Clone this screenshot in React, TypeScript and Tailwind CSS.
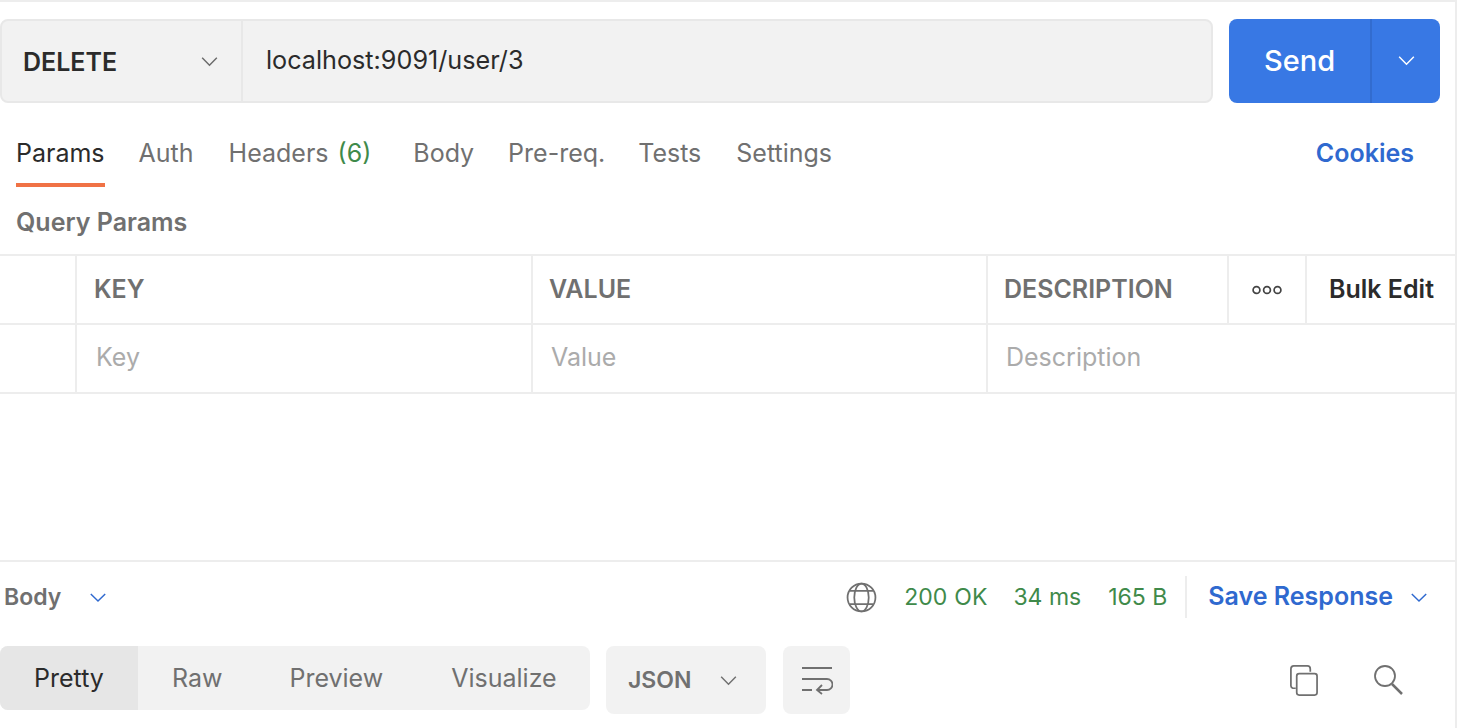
import React from "react";

const Chevron = ({ className }: { className: string }) => (
  <svg viewBox="0 0 20 12" fill="none" stroke="currentColor" strokeWidth="1.6" className={className}>
    <path d="M2 2l8 8 8-8" />
  </svg>
);

const HeaderCell = ({ w, children }: { w: string; children?: React.ReactNode }) => (
  <div className={`${w} shrink-0 h-full border-r-2 border-[#ededed] flex items-center pt-[1px] text-[25px] font-semibold text-[#707070]`}>{children}</div>
);

const RowCell = ({ w, children }: { w: string; children?: React.ReactNode }) => (
  <div className={`${w} shrink-0 h-full border-r-2 border-[#ededed] flex items-center pb-[2px] text-[25px] text-[#ababab]`}>{children}</div>
);

export default function App() {
  return (
    <div className="w-[1466px] h-[728px] bg-white overflow-hidden font-['Inter',sans-serif]">
      <div className="w-[1457px] h-[728px] border-r-2 border-t-2 border-[#ededed] flex flex-col">
        {/* Request bar */}
        <div className="flex h-[84px] mt-[17px] pr-[15px] gap-4 shrink-0">
          <div className="flex flex-1 h-full bg-[#f2f2f2] border-2 border-[#e8e8e8] rounded-lg">
            <div className="w-[241px] h-full shrink-0 border-r-2 border-[#e8e8e8] flex items-center justify-between pl-[21px] pr-[22px]">
              <span className="text-[25px] font-semibold text-[#2b2b2b] pt-[4px]">DELETE</span>
              <Chevron className="w-[19px] h-[11px] text-[#6b6b6b]" />
            </div>
            <div className="flex-1 flex items-center pl-[23px] text-[25.2px] text-[#2b2b2b]">localhost:9091/user/3</div>
          </div>
          <div className="w-[211px] h-full flex rounded-lg bg-[#3878e4] text-white">
            <div className="w-[143px] border-r-2 border-[#326ccf] flex items-center justify-center text-[29px] font-medium">Send</div>
            <div className="flex-1 flex items-center justify-center pb-[2px]">
              <Chevron className="w-[19px] h-[11px]" />
            </div>
          </div>
        </div>

        {/* Tabs */}
        <div className="flex h-[68px] mt-[16px] px-[16px] items-center shrink-0 text-[25px] text-[#707070]">
          <div className="relative h-full flex items-center text-[#2b2b2b] pt-[2px]">
            Params
            <div className="absolute left-0 right-0 bottom-0 h-[4px] bg-[#f07245]" />
          </div>
          <span className="ml-[34px] pt-[2px]">Auth</span>
          <span className="ml-[35px] pt-[2px]">Headers <span className="ml-[2px] text-[#3f8a4a]">(6)</span></span>
          <span className="ml-[42px] pt-[2px]">Body</span>
          <span className="ml-[34px] pt-[2px]">Pre-req.</span>
          <span className="ml-[33px] pt-[2px]">Tests</span>
          <span className="ml-[35px] pt-[2px]">Settings</span>
          <span className="ml-auto mr-[25px] font-semibold text-[#2f69cf] pt-[2px]">Cookies</span>
        </div>

        {/* Query params */}
        <div className="h-[67px] flex items-center pl-[16px] pt-[4px] text-[25px] font-semibold text-[#707070] shrink-0">Query Params</div>

        {/* Table */}
        <div className="border-t-2 border-[#ededed] shrink-0">
          <div className="h-[69px] flex border-b-2 border-[#ededed]">
            <HeaderCell w="w-[77px]" />
            <HeaderCell w="w-[456px] pl-[17px]">KEY</HeaderCell>
            <HeaderCell w="w-[455px] pl-[16px]">VALUE</HeaderCell>
            <HeaderCell w="w-[241px] pl-[16px]">DESCRIPTION</HeaderCell>
            <div className="w-[78px] shrink-0 h-full border-r-2 border-[#ededed] flex items-center justify-center">
              <svg viewBox="0 0 30 10" fill="none" stroke="#444" strokeWidth="1.7" className="w-[30px] h-[10px]">
                <circle cx="4.5" cy="5" r="3.4" />
                <circle cx="15" cy="5" r="3.4" />
                <circle cx="25.5" cy="5" r="3.4" />
              </svg>
            </div>
            <div className="flex-1 flex items-center pl-[22px] pt-[1px] text-[25px] font-semibold text-[#2b2b2b]">Bulk Edit</div>
          </div>
          <div className="h-[69px] flex border-b-2 border-[#ededed]">
            <RowCell w="w-[77px]" />
            <RowCell w="w-[456px] pl-[19px]">Key</RowCell>
            <RowCell w="w-[455px] pl-[18px]">Value</RowCell>
            <div className="flex-1 flex items-center pl-[18px] pb-[2px] text-[25px] text-[#ababab]">Description</div>
          </div>
        </div>

        <div className="h-[166px] shrink-0" />

        {/* Response status */}
        <div className="h-[68px] border-t-2 border-[#ededed] flex items-center pl-[4px] pr-[27px] pt-[4px] shrink-0 text-[23px]">
          <span className="font-semibold text-[#707070]">Body</span>
          <Chevron className="w-[18px] h-[11px] ml-[28px] text-[#2f69cf]" />
          <svg viewBox="0 0 30 30" fill="none" stroke="#707070" strokeWidth="1.7" className="w-[31px] h-[31px] ml-auto">
            <circle cx="15" cy="15" r="13.5" />
            <ellipse cx="15" cy="15" rx="7" ry="13.5" />
            <path d="M3.5 8.5h23M3.5 21.5h23" />
          </svg>
          <span className="ml-[27px] text-[#3f8a4a]">200</span>
          <span className="ml-[7px] text-[#3f8a4a]">OK</span>
          <span className="ml-[26px] text-[#3f8a4a]">34 ms</span>
          <span className="ml-[27px] text-[#3f8a4a]">165 B</span>
          <div className="w-[2px] h-[42px] bg-[#ededed] ml-[18px]" />
          <span className="ml-[21px] font-semibold text-[#2f69cf] text-[25px]">Save Response</span>
          <Chevron className="w-[18px] h-[11px] ml-[17px] text-[#2f69cf]" />
        </div>

        {/* Response toolbar */}
        <div className="flex items-start mt-[18px] text-[25px] text-[#707070] shrink-0">
          <div className="w-[590px] h-[64px] flex bg-[#f2f2f2] rounded-lg overflow-hidden">
            <div className="w-[138px] bg-[#e6e6e6] flex items-center justify-center pt-[1px] text-[#2b2b2b]">Pretty</div>
            <div className="ml-[34px] pt-[1px] flex items-center">Raw</div>
            <div className="ml-[67px] pt-[1px] flex items-center">Preview</div>
            <div className="ml-[68px] pt-[1px] flex items-center">Visualize</div>
          </div>
          <div className="w-[160px] h-[68px] ml-[16px] bg-[#f2f2f2] rounded-lg flex items-center justify-between pl-[22px] pr-[28px]">
            <span className="font-semibold text-[23px]">JSON</span>
            <Chevron className="w-[19px] h-[11px]" />
          </div>
          <div className="w-[67px] h-[68px] ml-[17px] bg-[#f2f2f2] rounded-lg flex items-center justify-center">
            <svg viewBox="0 0 32 30" fill="none" stroke="#707070" strokeWidth="1.8" className="w-[32px] h-[30px]">
              <path d="M1 3h30M1 14h25a4.500 4.500 0 0 1 0 11H17M21 20l-5 5 5 4M1 25h10" />
            </svg>
          </div>
          <div className="ml-auto mr-[51px] mt-[18px] flex items-center gap-[53px]">
            <svg viewBox="0 0 30 32" fill="none" stroke="#707070" strokeWidth="1.8" className="w-[31px] h-[31px]">
              <path d="M7 24H4a3 3 0 0 1-2-2.500V4a3 3 0 0 1 3-3h14a3 3 0 0 1 3 3v3" />
              <rect x="8" y="9" width="21" height="22" rx="2.500" />
            </svg>
            <svg viewBox="0 0 30 32" fill="none" stroke="#707070" strokeWidth="1.8" className="w-[32px] h-[32px]">
              <circle cx="12" cy="12" r="10" />
              <path d="M19 20l10 10" strokeWidth="2.500" />
            </svg>
          </div>
        </div>
      </div>
    </div>
  );
}
